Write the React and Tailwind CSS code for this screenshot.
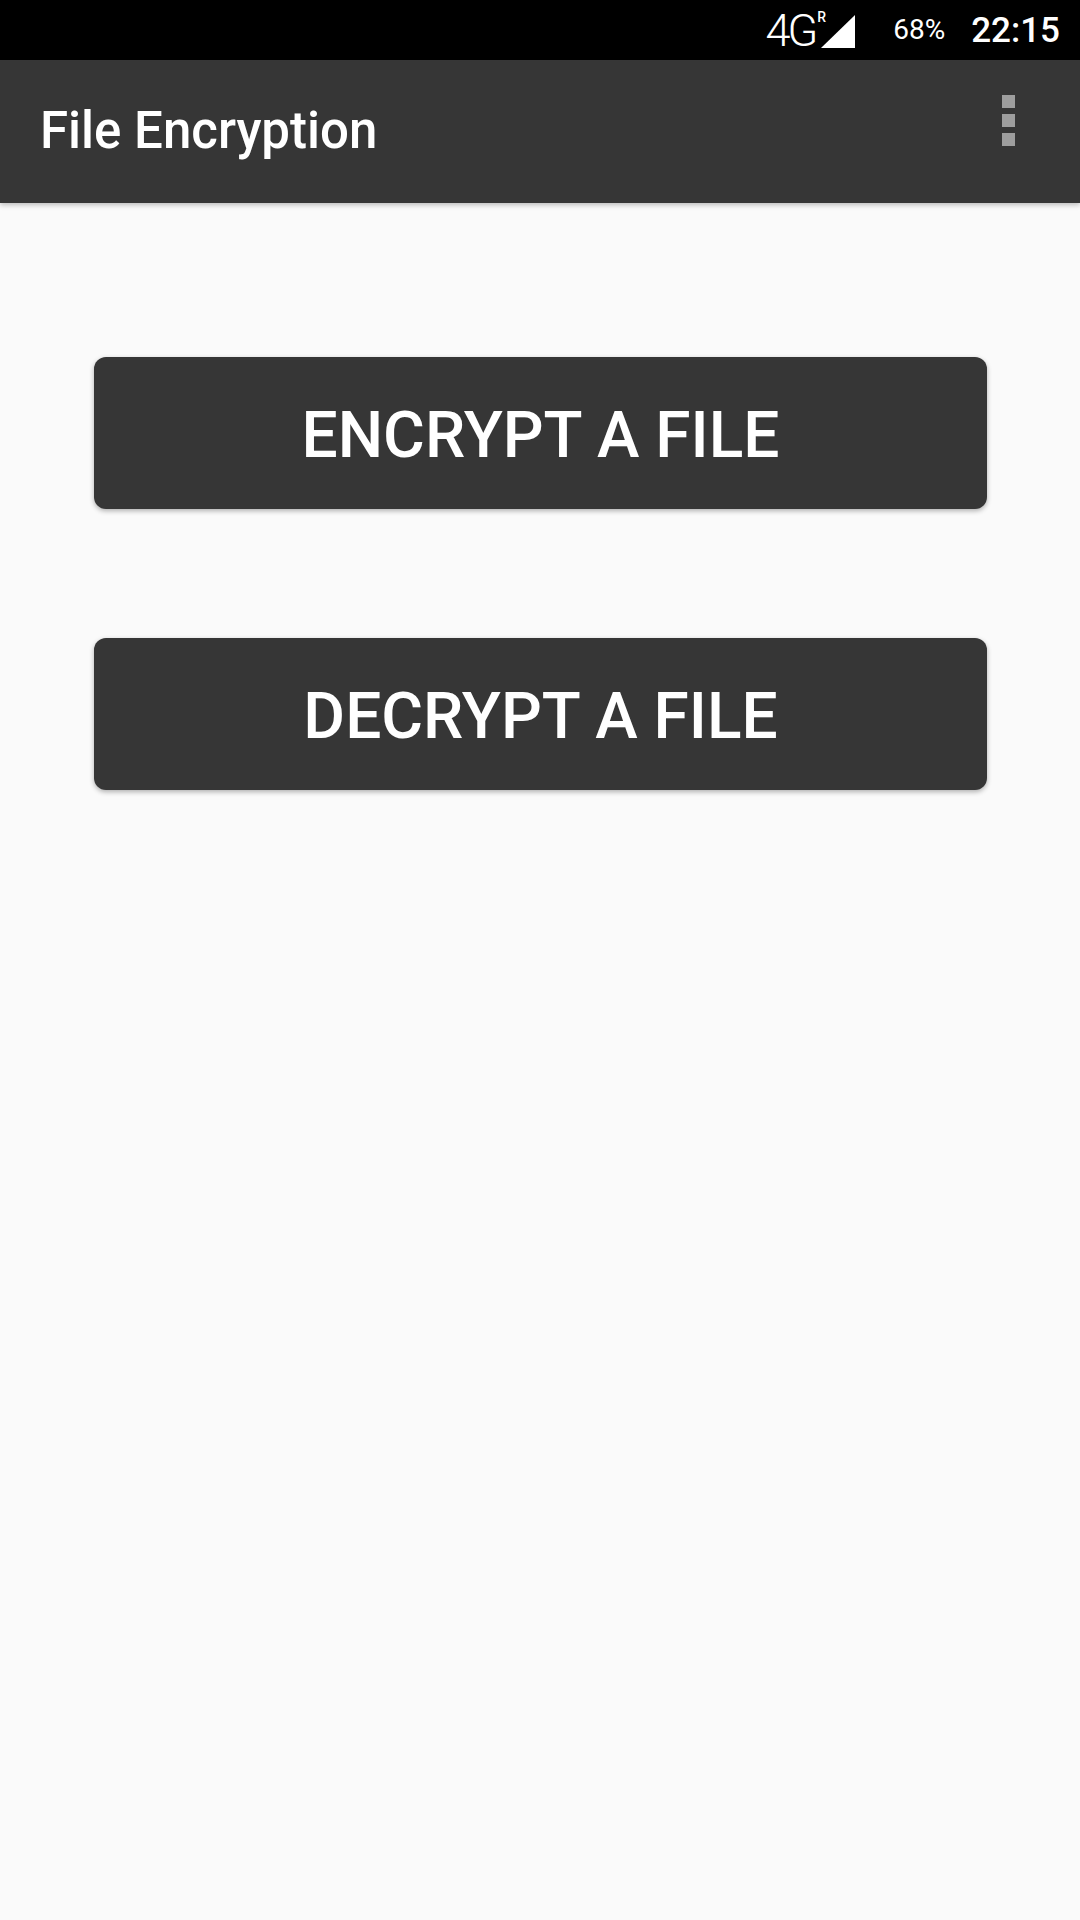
const App = () => {
  return (
    <div className="w-[1080px] h-[1920px] bg-[#fafafa] flex flex-col font-['Roboto','Liberation_Sans',sans-serif]">

      {/* status bar */}
      <div className="h-[60px] bg-black flex items-center justify-end pr-[20px] text-white">
        <div className="flex items-center">
          <span className="text-[45px] font-light tracking-[-3px] leading-none">4G</span>
          <div className="relative w-[38px] h-[34px] ml-[2px] mt-[1px]">
            <span className="absolute left-[0px] top-[-4px] text-[14px] font-medium leading-none">R</span>
            <svg viewBox="0 0 34 33" className="absolute right-0 bottom-0 w-[34px] h-[33px]">
              <polygon points="0,33 34,0 34,33" fill="#fff" />
            </svg>
          </div>
        </div>
        <span className="ml-[38px] text-[28px] leading-none">68%</span>
        <span className="ml-[26px] text-[35px] font-medium leading-none">22:15</span>
      </div>

      {/* app bar */}
      <div className="h-[143px] bg-[#363636] flex items-center justify-between pl-[40px] pr-[65px] shadow-[0_2px_5px_rgba(0,0,0,0.25)] relative z-10">
        <h1 className="text-white text-[51px] font-medium leading-none -mt-[2px]">File Encryption</h1>
        <div className="flex flex-col gap-[6px] -mt-[22px]">
          <div className="w-[13px] h-[13px] bg-[#9e9e9e]" />
          <div className="w-[13px] h-[13px] bg-[#9e9e9e]" />
          <div className="w-[13px] h-[13px] bg-[#9e9e9e]" />
        </div>
      </div>

      {/* content */}
      <div className="flex flex-col gap-[129px] pl-[94px] pr-[93px] pt-[154px]">
        <button className="h-[152px] w-full rounded-[12px] bg-[#363636] text-white text-[64px] font-medium pt-[6px] shadow-[0_2px_5px_rgba(0,0,0,0.3)]">
          ENCRYPT A FILE
        </button>
        <button className="h-[152px] w-full rounded-[12px] bg-[#363636] text-white text-[64px] font-medium pt-[6px] shadow-[0_2px_5px_rgba(0,0,0,0.3)]">
          DECRYPT A FILE
        </button>
      </div>

    </div>
  );
};

export default App;
